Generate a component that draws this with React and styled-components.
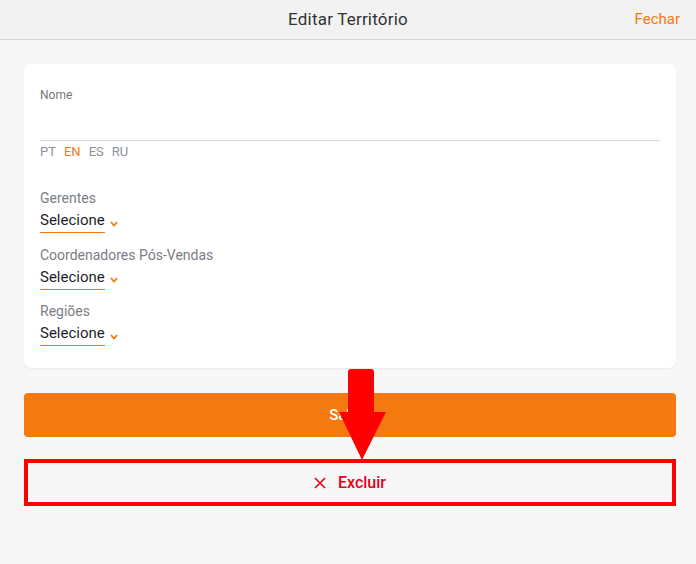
import React from "react";
import styled, { createGlobalStyle } from "styled-components";

const Global = createGlobalStyle`
  html, body { margin: 0; padding: 0; background: #f7f7f7; }
  body { font-family: Roboto, "Noto Sans", sans-serif; }
  * { box-sizing: border-box; }
`;

const Page = styled.div`
  position: relative;
  width: 696px;
  min-height: 564px;
  background: #f7f7f7;
`;

const Header = styled.header`
  height: 40px;
  background: #f2f2f2;
  border-bottom: 1px solid #d6d6d6;
  display: grid;
  grid-template-columns: 1fr auto 1fr;
  align-items: center;
  padding: 0 16px 2px;
`;

const Title = styled.h1`
  grid-column: 2;
  margin: 0;
  font-size: 17px;
  font-weight: 400;
  color: #333;
  letter-spacing: 0.2px;
`;

const Close = styled.button`
  justify-self: end;
  border: 0;
  background: none;
  padding: 0;
  font: inherit;
  font-size: 15px;
  color: #f47a10;
  cursor: pointer;
`;

const Content = styled.main`
  padding: 24px 20px 0 24px;
  display: flex;
  flex-direction: column;
`;

const Card = styled.section`
  background: #fff;
  border-radius: 8px;
  box-shadow: 0 1px 2px rgba(0, 0, 0, 0.06);
  padding: 24px 16px 22px;
  display: flex;
  flex-direction: column;
`;

const SmallLabel = styled.label`
  font-size: 12px;
  color: #777;
  line-height: 14px;
`;

const NameInput = styled.div`
  height: 35px;
  border-bottom: 1px solid #d9d9d9;
  margin-top: 4px;
`;

const Langs = styled.div`
  display: flex;
  gap: 8px;
  margin-top: 3px;
  margin-bottom: 29px;
`;

const Lang = styled.span`
  font-size: 13px;
  line-height: 16px;
  color: ${(p) => (p.$active ? "#f47a10" : "#8b919c")};
`;

const Field = styled.div`
  display: flex;
  flex-direction: column;
  align-items: flex-start;
  margin-top: ${(p) => (p.$first ? "0" : "12.5px")};
`;

const FieldLabel = styled.span`
  font-size: 14px;
  line-height: 18px;
  color: #7a7d85;
`;

const SelectRow = styled.div`
  display: flex;
  align-items: center;
  gap: 5px;
  margin-top: 4px;
`;

const SelectValue = styled.span`
  font-size: 15px;
  line-height: 18px;
  color: #1f1f2a;
  padding-bottom: 3px;
  border-bottom: 1.5px solid #f47a10;
`;

const Chevron = styled.svg`
  width: 8px;
  height: 6px;
  margin-top: 3px;
`;

const PrimaryButton = styled.button`
  margin-top: 25px;
  height: 44px;
  border: 0;
  border-radius: 4px;
  background: #f47a10;
  color: #fff;
  font: inherit;
  font-size: 15px;
  font-weight: 500;
`;

const DangerButton = styled.button`
  margin-top: 22px;
  height: 47px;
  border: 4px solid #ff0000;
  background: #f7f7f7;
  color: #e3001b;
  font: inherit;
  font-size: 16px;
  font-weight: 500;
  display: flex;
  align-items: center;
  justify-content: center;
  gap: 12px;
`;

const Arrow = styled.svg`
  position: absolute;
  left: 339px;
  top: 369px;
  width: 47px;
  height: 91px;
`;

const Select = ({ label, first }) => (
  <Field $first={first}>
    <FieldLabel>{label}</FieldLabel>
    <SelectRow>
      <SelectValue>Selecione</SelectValue>
      <Chevron viewBox="0 0 8 6">
        <polyline points="1,1 4,4.5 7,1" fill="none" stroke="#f47a10" strokeWidth="1.8" />
      </Chevron>
    </SelectRow>
  </Field>
);

export default function App() {
  return (
    <Page>
      <Global />
      <Header>
        <Title>Editar Território</Title>
        <Close>Fechar</Close>
      </Header>
      <Content>
        <Card>
          <SmallLabel>Nome</SmallLabel>
          <NameInput />
          <Langs>
            <Lang>PT</Lang>
            <Lang $active>EN</Lang>
            <Lang>ES</Lang>
            <Lang>RU</Lang>
          </Langs>
          <Select label="Gerentes" first />
          <Select label="Coordenadores Pós-Vendas" />
          <Select label="Regiões" />
        </Card>
        <PrimaryButton>Salvar</PrimaryButton>
        <DangerButton>
          <svg width="12" height="12" viewBox="0 0 12 12">
            <path d="M1 1 L11 11 M11 1 L1 11" stroke="#e3001b" strokeWidth="1.6" />
          </svg>
          Excluir
        </DangerButton>
      </Content>
      <Arrow viewBox="0 0 47 91">
        <path d="M9 3 Q9 0 12 0 L32 0 Q35 0 35 3 L35 43 L47 43 L23 91 L0 43 L9 43 Z" fill="#ff0000" />
      </Arrow>
    </Page>
  );
}
